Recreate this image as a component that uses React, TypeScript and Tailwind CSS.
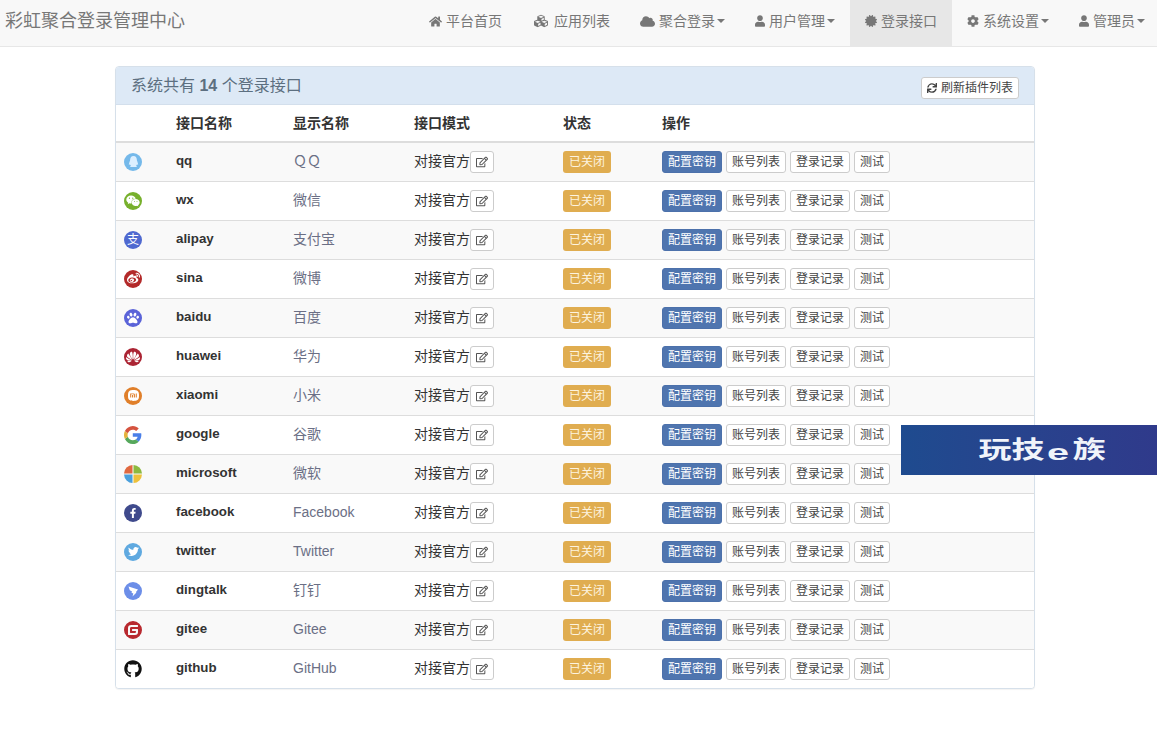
import type { ReactNode } from 'react'
import { FaHome, FaCubes, FaCloud, FaUser, FaCertificate, FaCog, FaRegEdit, FaSync, FaQq, FaWeixin, FaWeibo, FaFacebookF, FaTwitter, FaGithub, FaPaw } from 'react-icons/fa'
import { SiHuawei, SiXiaomi, SiGitee } from 'react-icons/si'

function Round({ className, children }: { className: string; children: ReactNode }) {
  return <span className={`flex h-[18px] w-[18px] items-center justify-center rounded-full text-white ${className}`}>{children}</span>
}

function GoogleIcon() {
  return (
    <svg width="18" height="18" viewBox="4 3 41 42">
      <path fill="#4a7fe8" d="M44 24c0-1.400-.1-2.800-.4-4H24v8h11.300c-.5 2.600-2 4.800-4.300 6.300l6.600 5.200C41.500 35.900 44 30.500 44 24z" />
      <path fill="#56a85c" d="M24 45c5.700 0 10.400-1.900 13.600-5.500L31 34.300c-1.800 1.200-4.100 2-7 2-5.400 0-9.900-3.600-11.500-8.500l-6.900 5.300C9 40 16 45 24 45z" />
      <path fill="#e5b23c" d="M12.500 27.800c-.8-2.400-.8-5.200 0-7.600l-6.900-5.300c-2.900 5.800-2.900 12.400 0 18.200z" />
      <path fill="#d5533f" d="M24 11.700c3.100 0 5.800 1.100 8 3.100l5.900-5.900C34.300 5.300 29.500 3 24 3 16 3 9 8 5.600 14.900l6.900 5.300c1.600-4.900 6.100-8.500 11.500-8.500z" />
    </svg>
  )
}

function MicrosoftIcon() {
  return (
    <svg width="18" height="18" viewBox="0 0 18 18">
      <path fill="#e0683f" d="M8.500 8.500H0A9 9 0 0 1 8.500 0z" />
      <path fill="#8cb93f" d="M9.500 8.500V0A9 9 0 0 1 18 8.500z" />
      <path fill="#4a9fdc" d="M8.500 9.500V18A9 9 0 0 1 0 9.500z" />
      <path fill="#edc13c" d="M9.500 9.500H18A9 9 0 0 1 9.500 18z" />
    </svg>
  )
}

function DingtalkIcon() {
  return (
    <svg width="18" height="18" viewBox="0 0 18 18">
      <circle cx="9" cy="9" r="9" fill="#6c8ee8" />
      <path fill="#fff" d="M4.500 4.500L14 7.500 11.800 10.200 12.500 10.500 8.500 14.500 9.300 11.500 7.500 10.800 8 9.500 5.800 8.300z" />
    </svg>
  )
}

const rows: { id: string; name: string; icon: ReactNode }[] = [
  { id: 'qq', name: 'ＱＱ', icon: <Round className="bg-[#75b9ea]"><FaQq size={11} className="text-[#dcefff]" /></Round> },
  { id: 'wx', name: '微信', icon: <Round className="bg-[#77b02c]"><FaWeixin size={14} /></Round> },
  { id: 'alipay', name: '支付宝', icon: <Round className="bg-[#4f69d0] text-[12px] leading-none">支</Round> },
  { id: 'sina', name: '微博', icon: <Round className="bg-[#b32a2a]"><FaWeibo size={13} /></Round> },
  { id: 'baidu', name: '百度', icon: <Round className="bg-[#5a63d8]"><FaPaw size={12} /></Round> },
  { id: 'huawei', name: '华为', icon: <Round className="bg-[#ab2433]"><SiHuawei size={14} /></Round> },
  { id: 'xiaomi', name: '小米', icon: <Round className="bg-[#e07f2a]"><SiXiaomi size={11} /></Round> },
  { id: 'google', name: '谷歌', icon: <GoogleIcon /> },
  { id: 'microsoft', name: '微软', icon: <MicrosoftIcon /> },
  { id: 'facebook', name: 'Facebook', icon: <Round className="bg-[#3f4a8c]"><FaFacebookF size={10} /></Round> },
  { id: 'twitter', name: 'Twitter', icon: <Round className="bg-[#5fa9e0]"><FaTwitter size={11} /></Round> },
  { id: 'dingtalk', name: '钉钉', icon: <DingtalkIcon /> },
  { id: 'gitee', name: 'Gitee', icon: <SiGitee size={18} className="text-[#b8292f]" /> },
  { id: 'github', name: 'GitHub', icon: <FaGithub size={18} className="text-[#111]" /> },
]

const navItems = [
  { label: '平台首页', icon: <FaHome className="h-[13px] w-[13px]" /> },
  { label: '应用列表', icon: <FaCubes className="h-[14px] w-[18px]" /> },
  { label: '聚合登录', icon: <FaCloud className="h-[13px] w-[15px]" />, caret: true },
  { label: '用户管理', icon: <FaUser className="h-[12px] w-[10px]" />, caret: true },
  { label: '登录接口', icon: <FaCertificate className="h-[12px] w-[12px]" />, active: true },
  { label: '系统设置', icon: <FaCog className="h-[12px] w-[12px]" />, caret: true },
  { label: '管理员', icon: <FaUser className="h-[12px] w-[10px]" />, caret: true },
]

const btn = 'inline-flex h-[22px] items-center rounded-[3px] border border-[#ccc] bg-white px-[5px] text-xs text-[#444]'

export default function App() {
  return (
    <div className="min-h-[748px] bg-white font-['Liberation_Sans','Noto_Sans_CJK_SC',sans-serif] text-sm text-[#333]">
      <nav className="flex h-[47px] items-stretch justify-between border-b border-[#e7e7e7] bg-[#f8f8f8]">
        <a className="pl-[5px] text-lg leading-[42px] text-[#777]">彩虹聚合登录管理中心</a>
        <ul className="flex items-stretch">
          {navItems.map((item) => (
            <li
              key={item.label}
              className={`flex items-center gap-[4px] pb-[4px] pl-[15px] pr-[15px] last:pr-[12px] text-[#777] ${item.active ? 'bg-[#e7e7e7] text-[#555]' : ''}`}
            >
              {item.icon}
              <span>{item.label}</span>
              {item.caret && <span className="-ml-[2px] h-0 w-0 border-x-[4px] border-t-[4px] border-x-transparent border-t-[#777]" />}
            </li>
          ))}
        </ul>
      </nav>

      <div className="ml-[115px] mt-[19px] w-[920px] overflow-hidden rounded border border-[#d6e0ea] bg-white shadow-[0_1px_1px_rgba(0,0,0,0.05)]">
        <div className="flex h-[38px] items-center justify-between border-b border-[#d3dfec] bg-[#dde9f6] pl-[15px] pr-[15px]">
          <h3 className="text-base text-[#5c6f80]">
            系统共有 <b>14</b> 个登录接口
          </h3>
          <button className={`${btn} mt-[4px] gap-[4px]`}>
            <FaSync size={10} />
            刷新插件列表
          </button>
        </div>
        <table className="w-full table-fixed border-collapse">
          <thead>
            <tr className="h-[37px] border-b-2 border-[#ddd] text-left">
              <th className="w-[52px]" />
              <th className="w-[117px] pl-2 font-bold">接口名称</th>
              <th className="w-[121px] pl-2 font-bold">显示名称</th>
              <th className="w-[149px] pl-2 font-bold">接口模式</th>
              <th className="w-[99px] pl-2 font-bold">状态</th>
              <th className="pl-2 font-bold">操作</th>
            </tr>
          </thead>
          <tbody>
            {rows.map((row, i) => (
              <tr key={row.id} className={`h-[39px] border-b border-[#ddd] last:border-b-0 ${i % 2 === 0 ? 'bg-[#f9f9f9]' : 'bg-white'}`}>
                <td className="pl-2">{row.icon}</td>
                <td className="pl-2 text-[13.3px] font-bold">{row.id}</td>
                <td className="pb-[2px] pl-2 text-[#6b6f85]">{row.name}</td>
                <td className="pl-2">
                  <div className="flex items-center">
                    <span className="mb-[2px]">对接官方</span>
                    <button className={`${btn} w-[24px] justify-center`}>
                      <FaRegEdit size={12} className="text-[#555]" />
                    </button>
                  </div>
                </td>
                <td className="pl-2">
                  <span className="inline-flex h-[22px] w-[48px] items-center justify-center rounded-[3px] bg-[#e0ad50] text-xs text-[#fdf3df]">已关闭</span>
                </td>
                <td className="pl-2">
                  <div className="flex gap-[4px]">
                    <a className="inline-flex h-[22px] items-center rounded-[3px] border border-[#4c71ab] bg-[#4f75af] px-[5px] text-xs text-white">配置密钥</a>
                    <a className={btn}>账号列表</a>
                    <a className={btn}>登录记录</a>
                    <a className={btn}>测试</a>
                  </div>
                </td>
              </tr>
            ))}
          </tbody>
        </table>
      </div>

      <div className="absolute left-[901px] top-[425px] flex h-[50px] w-[256px] items-center justify-center bg-gradient-to-r from-[#1e4b8f] to-[#2f3a8b] pl-[26px] text-[33px] font-bold text-[#f0f4fa]">
        <span className="scale-y-[0.72]">玩技</span>
        <span className="mx-[8px] mt-[6px] inline-block scale-x-[1.8] text-[22px] leading-none">e</span>
        <span className="scale-y-[0.72]">族</span>
      </div>
    </div>
  )
}
